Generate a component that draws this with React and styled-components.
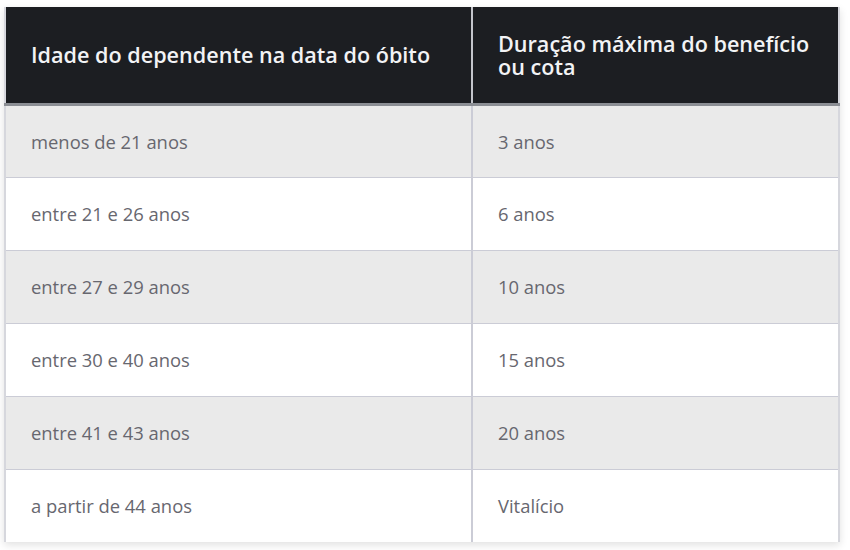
import React from 'react'
import styled, { createGlobalStyle } from 'styled-components';

const rows = [
    ['menos de 21 anos', '3 anos'],
    ['entre 21 e 26 anos', '6 anos'],
    ['entre 27 e 29 anos', '10 anos'],
    ['entre 30 e 40 anos', '15 anos'],
    ['entre 41 e 43 anos', '20 anos'],
    ['a partir de 44 anos', 'Vitalício'],
];

function App() {
    return (
        <>
            <GlobalStyle />
            <Page>
                <Table>
                    <colgroup>
                        <col style={{ width: 467 }} />
                        <col />
                    </colgroup>
                    <thead>
                        <tr>
                            <HeadCell>Idade do dependente na data do óbito</HeadCell>
                            <HeadCell>Duração máxima do benefício ou cota</HeadCell>
                        </tr>
                    </thead>
                    <tbody>
                        {rows.map(([age, duration], i) => (
                            <Row key={age} striped={i % 2 === 0}>
                                <Cell>{age}</Cell>
                                <Cell>{duration}</Cell>
                            </Row>
                        ))}
                    </tbody>
                </Table>
            </Page>
        </>
    )
}

export default App

const GlobalStyle = createGlobalStyle`
    body {
        margin: 0;
        background: #ffffff;
        font-family: "Open Sans", "DejaVu Sans", sans-serif;
    }
`;

const Page = styled.div`
    width: 850px;
    height: 550px;
    padding: 7px 10px 0 4px;
    box-sizing: border-box;
    overflow: hidden;
    background: #ffffff;
`;

const Table = styled.table`
    width: 836px;
    table-layout: fixed;
    border-collapse: collapse;
    border-left: 2px solid #d6d7dd;
    border-right: 2px solid #d6d7dd;
    box-shadow: 0 3px 8px rgba(0, 0, 0, 0.12);
`;

const HeadCell = styled.th`
    height: 97px;
    padding: 0 25px;
    box-sizing: border-box;
    background: #1c1e22;
    color: #f2f3f5;
    font-size: 21.6px;
    font-weight: 600;
    line-height: 23px;
    text-align: left;
    vertical-align: middle;
    border-bottom: 3px solid #8b8e94;
    & + & {
        border-left: 2px solid #c4c6cc;
    }
`;

const Row = styled.tr.withConfig({ shouldForwardProp: (p) => p !== 'striped' })`
    background: ${(p) => (p.striped ? '#eaeaea' : '#ffffff')};
    & + & {
        border-top: 1px solid #cbccd6;
    }
`;

const Cell = styled.td`
    height: 73px;
    padding: 0 25px;
    box-sizing: border-box;
    color: #67676f;
    font-size: 18.4px;
    vertical-align: middle;
    & + & {
        border-left: 2px solid #cbccd6;
    }
`;
